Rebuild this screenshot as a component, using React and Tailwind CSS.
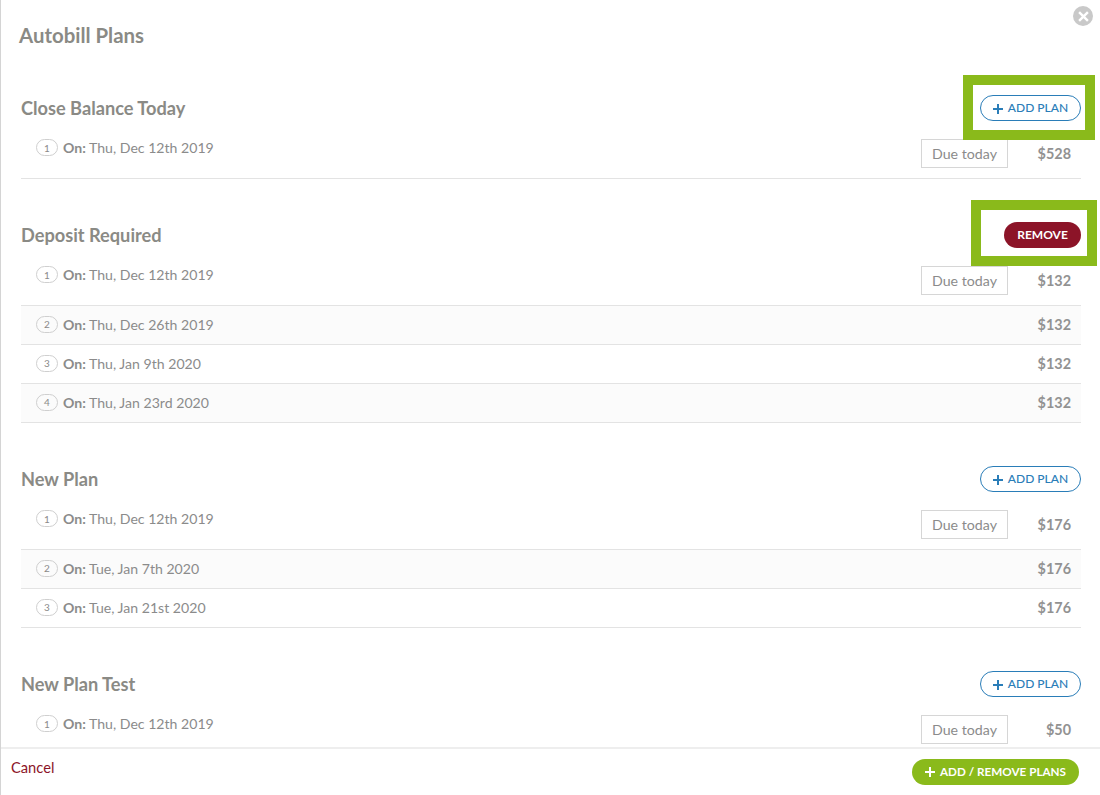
const font = { fontFamily: "Lato, sans-serif" };

const sections = [
  { title: "Close Balance Today", action: "add", highlight: "add", rows: [["Thu, Dec 12th 2019", "$528"]] },
  { title: "Deposit Required", action: "remove", highlight: "remove", rows: [["Thu, Dec 12th 2019", "$132"], ["Thu, Dec 26th 2019", "$132"], ["Thu, Jan 9th 2020", "$132"], ["Thu, Jan 23rd 2020", "$132"]] },
  { title: "New Plan", action: "add", rows: [["Thu, Dec 12th 2019", "$176"], ["Tue, Jan 7th 2020", "$176"], ["Tue, Jan 21st 2020", "$176"]] },
  { title: "New Plan Test", action: "add", rows: [["Thu, Dec 12th 2019", "$50"]] },
];

function Plus({ className }) {
  return (
    <svg viewBox="0 0 10 10" className={className} fill="none" stroke="currentColor" strokeWidth="2">
      <path d="M5 0V10M0 5H10" />
    </svg>
  );
}

function Badge({ n }) {
  return (
    <span className="flex h-[17px] w-[22px] shrink-0 items-center justify-center rounded-full border border-[#cfcfcf] text-[10px] leading-none text-[#8a8a8a]">{n}</span>
  );
}

function AddButton({ highlight }) {
  return (
    <div className="relative">
      {highlight && <div className="absolute left-[-17px] top-[-20px] h-[65px] w-[132px] border-[10px] border-[#8aba1b]" />}
      <button className="relative flex h-[26px] w-[101px] items-center justify-center gap-[5px] rounded-full border border-[#2a7db8] bg-white text-[12px] font-medium text-[#2a7db8]">
        <Plus className="mt-[1px] h-[10px] w-[10px]" />
        <span>ADD PLAN</span>
      </button>
    </div>
  );
}

function RemoveButton({ highlight }) {
  return (
    <div className="relative">
      {highlight && <div className="absolute left-[-33px] top-[-22px] h-[66px] w-[126px] border-[10px] border-[#8aba1b]" />}
      <button className="relative flex h-[26px] w-[77px] items-center justify-center rounded-full bg-[#8c1428] text-[12px] font-bold text-white">REMOVE</button>
    </div>
  );
}

function Row({ index, date, amount }) {
  const first = index === 0;
  return (
    <div className={`flex border-b border-[#e3e3e3] ${first ? "h-[58px]" : "h-[39px] items-center pb-[1px]"} ${index % 2 === 1 ? "bg-[#fbfbfb]" : ""}`}>
      <div className={`flex flex-1 items-center gap-[5px] pl-[15px] text-[14.1px] text-[#8b8b8b] ${first ? "h-[53px]" : ""}`}>
        <Badge n={index + 1} />
        <span><b className="font-bold">On:</b> {date}</span>
      </div>
      {first && (
        <span className="mt-[18px] flex h-[29px] w-[87px] items-center justify-center border border-[#d6d6d6] text-[14.2px] text-[#8b8b8b]">Due today</span>
      )}
      <span className={`w-[73px] pr-[10px] text-right text-[14.4px] font-bold text-[#929292] ${first ? "mt-[19px] flex h-[28px] items-center justify-end" : ""}`}>{amount}</span>
    </div>
  );
}

export default function App() {
  return (
    <div className="flex h-[795px] w-[1100px] flex-col overflow-hidden border-l border-[#d4d4d4] bg-white" style={font}>
      <div className="relative h-[747px] shrink-0 overflow-hidden pl-[20px] pr-[19px]">
        <button className="absolute right-[7px] top-[6px] flex h-[20px] w-[20px] items-center justify-center rounded-full bg-[#c9c9c9] text-white">
          <svg viewBox="0 0 10 10" className="h-[11px] w-[11px]" fill="none" stroke="currentColor" strokeWidth="2.2"><path d="M1 1L9 9M9 1L1 9" /></svg>
        </button>
        <h1 className="ml-[-2px] pt-[22px] text-[20.4px] font-bold leading-[27px] text-[#8a8a85]">Autobill Plans</h1>
        <div className="flex flex-col gap-[43px] pt-[46px]">
          {sections.map((s) => (
            <section key={s.title}>
              <div className="flex h-[26px] items-center justify-between">
                <h2 className="pt-[2px] text-[18.2px] font-bold text-[#8a8a85]">{s.title}</h2>
                {s.action === "add" ? <AddButton highlight={s.highlight === "add"} /> : <RemoveButton highlight={s.highlight === "remove"} />}
              </div>
              <div>
                {s.rows.map((r, i) => <Row key={i} index={i} date={r[0]} amount={r[1]} />)}
              </div>
            </section>
          ))}
        </div>
      </div>
      <div className="flex h-[47px] items-center justify-between border-t-2 border-[#eeeeee] pl-[10px] pr-[21px]">
        <a className="mb-[8px] text-[14.7px] text-[#8c1428]">Cancel</a>
        <button className="flex h-[26px] w-[167px] items-center justify-center gap-[5px] rounded-full bg-[#8aba1b] text-[11.7px] font-bold text-white">
          <Plus className="mt-[1px] h-[10px] w-[10px]" />
          <span>ADD / REMOVE PLANS</span>
        </button>
      </div>
    </div>
  );
}
